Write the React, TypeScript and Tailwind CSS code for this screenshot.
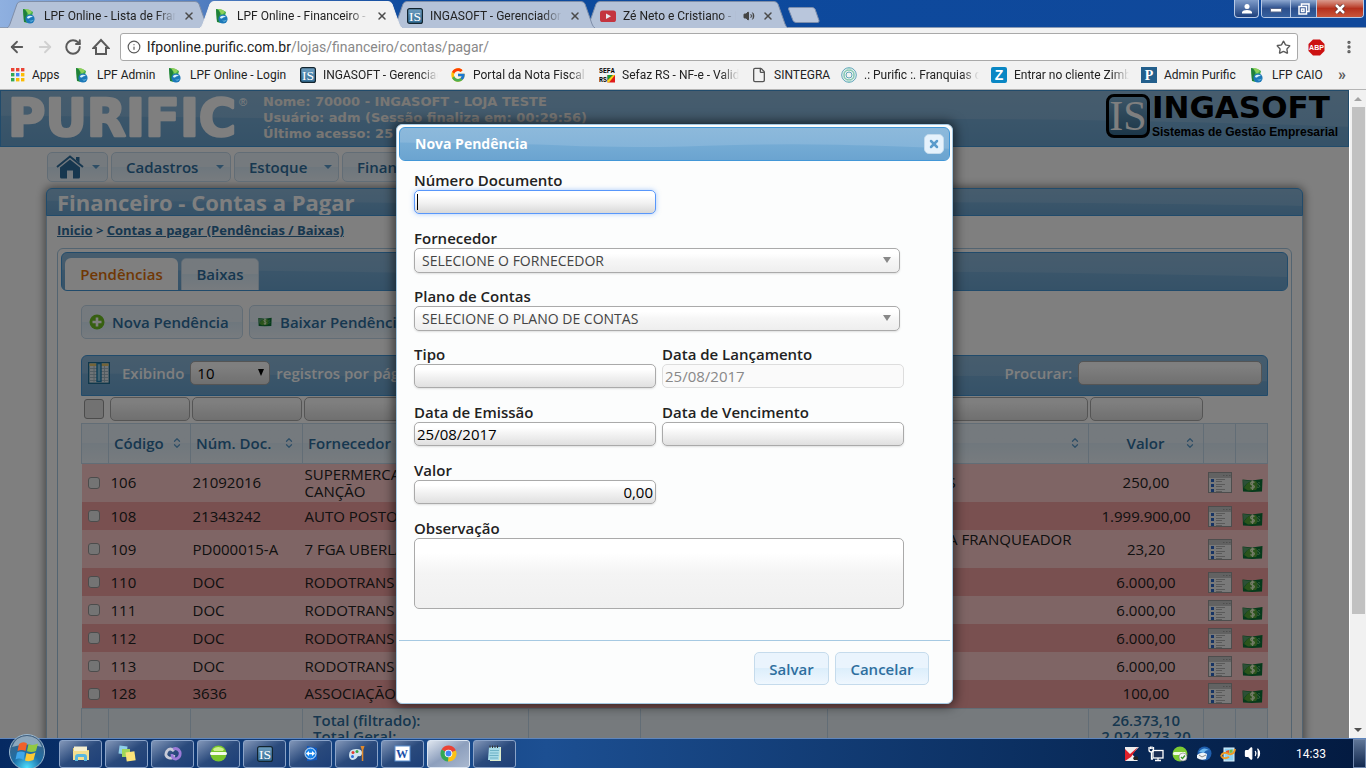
import React from 'react';
import {
  ArrowLeft, ArrowRight, RotateCw, House, Info, Star, EllipsisVertical, X, File, Volume2,
  ChevronUp, ChevronDown,
} from 'lucide-react';
import { FcGoogle } from 'react-icons/fc';

/* ---------- small drawings ---------- */

function LeafIcon() {
  return (
    <svg width="16" height="16" viewBox="0 0 16 16" className="shrink-0">
      <path d="M2 1 Q8 1 12 4 L11 8 L6 15 L3 14 Z" fill="#3fae49" />
      <path d="M2 1 Q6 2 6 6 L5 14 L3 14 Z" fill="#1f7f3a" />
      <path d="M4 1 Q9 1 11 4 L8 7 Z" fill="#8ed05a" />
      <circle cx="9" cy="11" r="4.6" fill="#1c78b8" />
      <path d="M6 9 Q9 6.500 12 9 Q9 8.500 8 10.500 Q6 11 6 9 Z" fill="#d8f1fc" />
      <path d="M8 12.500 Q11 13.500 13 11.500 Q11 15 8 12.500 Z" fill="#8fd4f4" />
    </svg>
  );
}

function IsIcon({ size = 16 }: { size?: number }) {
  return (
    <svg width={size} height={size} viewBox="0 0 16 16" className="shrink-0">
      <defs>
        <linearGradient id="isg" x1="0" y1="0" x2="0" y2="1">
          <stop offset="0" stopColor="#6d9dbf" />
          <stop offset="1" stopColor="#346f97" />
        </linearGradient>
      </defs>
      <rect x="0.6" y="0.6" width="14.8" height="14.8" rx="2" fill="url(#isg)" stroke="#12242f" strokeWidth="1.2" />
      <text x="8" y="12.8" textAnchor="middle" fontSize="13.5" fontFamily="Liberation Serif, serif" fill="#fff">IS</text>
    </svg>
  );
}

function YoutubeIcon() {
  return (
    <svg width="16" height="16" viewBox="0 0 16 16" className="shrink-0">
      <rect x="0" y="2.5" width="16" height="11.5" rx="2.6" fill="#c4343f" />
      <path d="M6 5.5 L11 8.2 L6 11 Z" fill="#e6e6ee" />
    </svg>
  );
}

function SefaIcon() {
  return (
    <svg width="16" height="16" viewBox="0 0 16 16" className="shrink-0">
      <text x="0" y="6" fontSize="6.500" fontWeight="700" fontFamily="Liberation Mono, monospace" fill="#000">SEFA</text>
      <text x="0" y="15" fontSize="6.500" fontWeight="700" fontFamily="Liberation Mono, monospace" fill="#000">RS</text>
      <rect x="8.5" y="8" width="7.5" height="7.5" fill="#e01b1b" />
      <path d="M8.500 8 H14 L8.500 13.500 Z" fill="#159a36" />
      <path d="M14 8 H16 L10 15.500 H8.500 V13.500 Z" fill="#f5d819" />
    </svg>
  );
}

function AppsIcon() {
  const colors = ['#ea4335', '#ea4335', '#ea4335', '#34a853', '#4285f4', '#fbbc05', '#34a853', '#fbbc05', '#fbbc05'];
  return (
    <svg width="14" height="14" viewBox="0 0 14 14" className="shrink-0">
      {colors.map((c, i) => (
        <rect key={i} x={(i % 3) * 5} y={Math.floor(i / 3) * 5} width="3.400" height="3.400" fill={c} />
      ))}
    </svg>
  );
}

function RingsIcon() {
  return (
    <svg width="16" height="16" viewBox="0 0 16 16" className="shrink-0" fill="none">
      <circle cx="8" cy="8" r="7.300" stroke="#5ba5b8" />
      <circle cx="8" cy="8" r="5" stroke="#5fbb9c" />
      <circle cx="8" cy="8" r="3" stroke="#5ba5b8" />
      <path d="M8 1 L13 5 V11 L8 15 L3 11 V5 Z" stroke="#8ecfbe" strokeWidth="0.8" />
    </svg>
  );
}

function LetterIcon({ letter, serif }: { letter: string; serif?: boolean }) {
  return (
    <svg width="16" height="16" viewBox="0 0 16 16" className="shrink-0">
      <rect width="16" height="16" rx={serif ? 0 : 2} fill={serif ? '#235f8c' : '#0a87c4'} />
      <text x="8" y="13" textAnchor="middle" fontSize="14" fontWeight="700"
        fontFamily={serif ? 'Liberation Serif, serif' : 'Liberation Sans, sans-serif'} fill="#fff">{letter}</text>
    </svg>
  );
}

function MoneyIcon({ small }: { small?: boolean }) {
  return (
    <svg width={small ? 14 : 21} height={small ? 10 : 15} viewBox="0 0 21 15" className="inline-block shrink-0">
      <path d="M0.500 1.500 L10 2.500 L20.500 1 L20 13.500 L10 14 L1 13.500 Z" fill="#0c7436" />
      <path d="M2 10 Q5 4 10 3 L14 3 Q17 8 14 12 L6 12.500 Z" fill="#57a836" />
      <path d="M1 2 L9 3 Q4 5 1.500 10 Z" fill="#5aa06c" />
      <path d="M12.500 4.500 Q10.500 3 9 4.500 Q8 6.500 10.500 7 Q13 8 12 9.500 Q10.500 11 8.500 9.500 M10.500 2.500 V12" stroke="#e8f8d0" strokeWidth="1.300" fill="none" />
      <path d="M18 5 Q16 4 15.500 5.500 Q15.500 7 17 7 Q18.500 8 17.500 9 Q16 10 15 9" stroke="#6fbf7a" strokeWidth="1" fill="none" />
    </svg>
  );
}

function DetailIcon() {
  return (
    <svg width="24" height="21" viewBox="0 0 24 21" className="inline-block">
      <rect x="0.500" y="0.500" width="23" height="20" fill="#f2f2f2" stroke="#9a9a9a" />
      <rect x="1" y="1" width="22" height="5" fill="#c4c4c4" />
      <path d="M15 3.500 h1.500 M18 3.500 h1.500 M21 3.500 h1.500" stroke="#9c9c9c" />
      {[7, 12, 17].map((y) => (
        <g key={y}>
          <rect x="3" y={y} width="3" height="3" fill="#2f68c8" />
          <path d={`M8 ${y + 0.5} H17 M8 ${y + 2.5} H14`} stroke="#b4b4b4" />
        </g>
      ))}
    </svg>
  );
}

function ColumnsIcon() {
  return (
    <svg width="22" height="22" viewBox="0 0 22 22" className="shrink-0">
      <rect x="0.700" y="0.700" width="20.600" height="20.600" fill="#dfe9ef" stroke="#1e6f96" strokeWidth="1.400" />
      <rect x="1.500" y="1.500" width="19" height="2.500" fill="#e6c970" />
      <path d="M2 6.500 H20 M2 9.500 H20 M2 12.500 H20 M2 15.500 H20 M2 18.500 H20 M6 4 V20 M16.500 4 V20" stroke="#9db4c1" strokeWidth="0.900" />
      <rect x="9" y="1.500" width="4" height="18" fill="#87c6e4" stroke="#1c7db0" strokeWidth="1.400" />
    </svg>
  );
}

function HomeMenuIcon() {
  return (
    <svg width="28" height="24" viewBox="0 0 28 24" className="shrink-0">
      <path d="M1 12 L14 1.500 L27 12" fill="none" stroke="#2e6e9e" strokeWidth="2" />
      <path d="M20 2 H23.500 V8 L20 5 Z" fill="#2e6e9e" />
      <path d="M4 12.500 L14 4.500 L24 12.500 V22 Q24 23.500 22.500 23.500 H17 V15.500 H11 V23.500 H5.500 Q4 23.500 4 22 Z" fill="#2e6e9e" />
    </svg>
  );
}

function PlusIcon() {
  return (
    <svg width="16" height="16" viewBox="0 0 16 16" className="shrink-0">
      <circle cx="8" cy="8" r="7.500" fill="#6fc023" />
      <path d="M8 3.500 V12.500 M3.500 8 H12.500" stroke="#fff" strokeWidth="2.600" />
    </svg>
  );
}

/* The glossy bar of the theme, with its wave drawn behind the content. */
function GlossBar({ className, children }: { className: string; children?: React.ReactNode }) {
  return (
    <div className={`relative overflow-hidden border border-[#4297d7] bg-linear-to-b from-[#8db9db] to-[#7eb1d8] ${className}`}>
      <svg className="absolute inset-0 h-full w-full" viewBox="0 0 100 40" preserveAspectRatio="none" aria-hidden="true">
        <defs>
          <linearGradient id="wave" x1="0" y1="0" x2="0" y2="1">
            <stop offset="0" stopColor="#76acd5" />
            <stop offset="1" stopColor="#6ba4d0" />
          </linearGradient>
        </defs>
        <path d="M0 18 Q20 19 30 22 T52 23 Q68 19 80 21 T100 26 V40 H0 Z" fill="url(#wave)" />
      </svg>
      {children}
    </div>
  );
}

/* ---------- browser window ---------- */

const bookmarks = [
  { w: 'w-[63px]', label: 'Apps', icon: <AppsIcon /> },
  { w: 'w-[93px]', label: 'LPF Admin', icon: <LeafIcon /> },
  { w: 'w-[133px]', label: 'LPF Online - Login', icon: <LeafIcon /> },
  { w: 'w-[150px]', label: 'INGASOFT - Gerenciador', icon: <IsIcon />, fade: true },
  { w: 'w-[149px]', label: 'Portal da Nota Fiscal Eletrônica', icon: <FcGoogle size={16} className="shrink-0" />, fade: true },
  { w: 'w-[152px]', label: 'Sefaz RS - NF-e - Validador', icon: <SefaIcon />, fade: true },
  { w: 'w-[90px]', label: 'SINTEGRA', icon: <File size={16} color="#555" className="shrink-0" strokeWidth={2} /> },
  { w: 'w-[150px]', label: '.: Purific :. Franquias de', icon: <RingsIcon />, fade: true },
  { w: 'w-[150px]', label: 'Entrar no cliente Zimbra', icon: <LetterIcon letter="Z" />, fade: true },
  { w: 'w-[108px]', label: 'Admin Purific', icon: <LetterIcon letter="P" serif /> },
  { w: 'w-[80px]', label: 'LFP CAIO', icon: <LeafIcon /> },
];

const tabs = [
  { label: 'LPF Online - Lista de Franquias', icon: <LeafIcon />, z: 'z-10' },
  { label: 'LPF Online - Financeiro - Contas', icon: <LeafIcon />, active: true, z: 'z-20' },
  { label: 'INGASOFT - Gerenciador', icon: <IsIcon />, z: 'z-10' },
  { label: 'Zé Neto e Cristiano - Ela', icon: <YoutubeIcon />, audio: true, z: 'z-0' },
];

const fadeText = 'mask-r-from-85% mask-r-to-100%';

function TabStrip() {
  return (
    <header className="flex h-7 shrink-0 items-end border-b border-[#8a9bb5] bg-linear-to-r from-[#8fb0e0] via-[#0b4a9e] via-30% to-[#10489a]">
      <div className="-mb-px flex pl-[7px]">
        {tabs.map((t) => (
          <div key={t.label} className={`relative -mr-[9px] flex h-[27px] w-[202px] items-center pt-0.5 pr-[10px] pl-[14px] ${t.z}`}>
            <svg className="absolute inset-0 h-full w-full" viewBox="0 0 202 27" preserveAspectRatio="none" aria-hidden="true">
              <path d="M0 27 Q2 26 3 23 L10 3 Q11 0.500 14 0.500 H188 Q191 0.500 192 3 L199 23 Q200 26 202 27"
                fill={t.active ? '#f2f2f2' : '#b4c2d8'} stroke={t.active ? '#f2f2f2' : '#7f8ea8'} />
            </svg>
            <div className="relative flex w-full items-center gap-[7px]">
              {t.icon}
              <span className={`min-w-0 flex-1 overflow-hidden whitespace-nowrap ${fadeText}`}>{t.label}</span>
              {t.audio && <Volume2 size={12} fill="#444" color="#444" />}
              <button aria-label="Fechar aba" className="mr-1"><X size={12} color="#4b4b4b" strokeWidth={3} /></button>
            </div>
          </div>
        ))}
      </div>
      <button aria-label="Nova aba" className="mb-1 ml-2">
        <svg width="34" height="16" viewBox="0 0 34 16"><path d="M1.500 2 Q1 0.500 3 0.500 H25 Q27 0.500 28 2 L32 13.500 Q32.500 15.500 30.500 15.500 H9 Q7 15.500 6 13.500 Z" fill="#b9c6dc" stroke="#7d8fae" /></svg>
      </button>
      <div className="ml-auto flex gap-0.5 self-start pr-0.5">
        <button aria-label="Usuário" className="flex h-[18px] w-[25px] items-center justify-center rounded-b border border-t-0 border-[#b7c9e6] bg-linear-to-b from-[#7f9cc9] to-[#1c3f7c]">
          <svg width="10" height="10" viewBox="0 0 10 10"><circle cx="5" cy="2.500" r="2.500" fill="#fff" /><path d="M0 9.500 V8 Q1 6 5 6 T10 8 V9.500 Z" fill="#fff" /></svg>
        </button>
        <div className="flex h-[18px] overflow-hidden rounded-b border border-t-0 border-[#b7c9e6]">
          <button aria-label="Minimizar" className="flex w-7 items-end justify-center bg-linear-to-b from-[#8ea8d0] via-[#2c4f8c] via-50% to-[#35609f] pb-1">
            <svg width="12" height="5" viewBox="0 0 12 5"><rect x="0.500" y="0.500" width="11" height="3.500" fill="#fff" stroke="#55668a" /></svg>
          </button>
          <button aria-label="Restaurar" className="flex w-[27px] items-center justify-center border-x border-[#b7c9e6] bg-linear-to-b from-[#8ea8d0] via-[#2c4f8c] via-50% to-[#35609f]">
            <svg width="12" height="12" viewBox="0 0 12 12" fill="none" stroke="#fff" strokeWidth="1.500"><path d="M3.500 3 V1 H11 V8.500 H9" /><rect x="1" y="3.500" width="7.500" height="7.500" /><rect x="3.500" y="6" width="2.500" height="2.500" /></svg>
          </button>
          <button aria-label="Fechar" className="flex w-[46px] items-center justify-center bg-linear-to-b from-[#d99a8e] via-[#b5301d] via-50% to-[#c9553a]">
            <svg width="12" height="10" viewBox="0 0 12 10"><path d="M2 1 L10 9 M10 1 L2 9" stroke="#5b2a2a" strokeWidth="4" /><path d="M2 1 L10 9 M10 1 L2 9" stroke="#fff" strokeWidth="2.500" /></svg>
          </button>
        </div>
      </div>
    </header>
  );
}

function BrowserBars() {
  return (
    <nav className="flex h-[62px] shrink-0 flex-col border-b border-[#b5b5b5] bg-[#f2f2f2]">
      <div className="flex items-center gap-[10px] pt-[5px] pr-[9px] pl-2">
        <button aria-label="Voltar"><ArrowLeft size={18} color="#5a5a5a" strokeWidth={2.4} /></button>
        <button aria-label="Avançar"><ArrowRight size={18} color="#d0d0d0" strokeWidth={2.4} /></button>
        <button aria-label="Recarregar"><RotateCw size={18} color="#5a5a5a" strokeWidth={2.6} /></button>
        <button aria-label="Início">
          <svg width="18" height="18" viewBox="0 0 18 18" fill="none" stroke="#5a5a5a" strokeWidth="2"><path d="M1.500 10 L9 2 L16.500 10 H14 V16 H4 V10 Z" /></svg>
        </button>
        <div className="flex h-7 flex-1 items-center gap-[6px] rounded-[3px] border border-[#a9a9a9] bg-white px-[6px]">
          <Info size={14} color="#5a5a5a" />
          <span className="flex-1 text-sm"><span>lfponline.purific.com.br</span><span className="text-[#888]">/lojas/financeiro/contas/pagar/</span></span>
          <button aria-label="Favorito"><Star size={15} color="#5a5a5a" strokeWidth={2.2} /></button>
        </div>
        <svg width="17" height="17" viewBox="0 0 17 17">
          <path d="M5 0.500 H12 L16.500 5 V12 L12 16.500 H5 L0.500 12 V5 Z" fill="#cc1111" />
          <text x="8.500" y="11.300" textAnchor="middle" fontSize="7" fontWeight="700" fontFamily="Liberation Sans, sans-serif" fill="#fff">ABP</text>
        </svg>
        <button aria-label="Menu" className="ml-[6px]"><EllipsisVertical size={16} color="#5a5a5a" strokeWidth={3} /></button>
      </div>
      <div className="flex flex-1 items-center pr-5 pl-[11px]">
        {bookmarks.map((b) => (
          <a key={b.label} href="#" className={`flex shrink-0 items-center gap-[7px] ${b.fade ? 'pr-3' : ''} ${b.w}`}>
            {b.icon}
            <span className={`whitespace-nowrap ${b.fade ? `overflow-hidden ${fadeText}` : ''}`}>{b.label}</span>
          </a>
        ))}
        <button aria-label="Mais favoritos" className="ml-auto text-base leading-4 font-bold text-[#5a5a5a]">»</button>
      </div>
    </nav>
  );
}

/* ---------- page behind the dialog ---------- */

const rows = [
  { cod: '106', doc: '21092016', forn: 'SUPERMERCADO CANÇÃO', plano: 'S', valor: '250,00', h: 'h-[39px]' },
  { cod: '108', doc: '21343242', forn: 'AUTO POSTO', valor: '1.999.900,00', h: 'h-7' },
  { cod: '109', doc: 'PD000015-A', forn: '7 FGA UBERLANDIA', plano: 'A FRANQUEADOR', valor: '23,20', h: 'h-[38px]' },
  { cod: '110', doc: 'DOC', forn: 'RODOTRANS', valor: '6.000,00', h: 'h-7' },
  { cod: '111', doc: 'DOC', forn: 'RODOTRANS', valor: '6.000,00', h: 'h-7' },
  { cod: '112', doc: 'DOC', forn: 'RODOTRANS', valor: '6.000,00', h: 'h-7' },
  { cod: '113', doc: 'DOC', forn: 'RODOTRANS', valor: '6.000,00', h: 'h-7' },
  { cod: '128', doc: '3636', forn: 'ASSOCIAÇÃO', valor: '100,00', h: 'h-7' },
];

const fieldSkin = 'rounded-[5px] border border-[#aaa] bg-linear-to-b from-white from-20% via-[#f1f1f1] via-55% to-[#e0e0e0]';
const buttonSkin = 'rounded-[5px] border border-[#c5dbec] bg-linear-to-b from-[#eaf4fd] from-50% via-[#dceefb] via-50% to-[#eff7fe] font-semibold text-[#2e6e9e]';

function Sorter() {
  return (
    <span className="flex flex-col text-[#5c9ccc]">
      <ChevronUp size={10} strokeWidth={3} className="-mb-0.5" />
      <ChevronDown size={10} strokeWidth={3} className="-mt-0.5" />
    </span>
  );
}

const headCells = ['', 'Código', 'Núm. Doc.', 'Fornecedor', '', '', '', 'Valor', '', ''];
const colWidths = ['w-[27px]', 'w-[82px]', 'w-[112px]', 'w-[226px]', 'w-[112px]', 'w-[187px]', '', 'w-[115px]', 'w-8', 'w-8'];

function BillsTable() {
  return (
    <table className="w-full table-fixed border-collapse">
      <colgroup>{colWidths.map((w, i) => <col key={i} className={w} />)}</colgroup>
      <thead>
        <tr className="h-[27px]">
          {headCells.map((_, i) => (
            <td key={i} className="px-px">
              {i === 0 && <button aria-label="Selecionar todos" className="ml-px block h-5 w-5 rounded-[3px] border border-[#999] bg-[#e4e4e4]" />}
              {i > 0 && i < 8 && <input aria-label={`Filtro ${i}`} className={`block h-6 w-full ${fieldSkin}`} />}
            </td>
          ))}
        </tr>
        <tr className="h-10 bg-linear-to-b from-[#eaf4fd] from-50% via-[#e0effa] via-50% to-[#eff7fe]">
          {headCells.map((h, i) => (
            <th key={i} className="border border-[#c5dbec] px-[5px] text-left font-semibold text-[#2e6e9e]">
              <span className="flex items-center justify-between">
                <span className={i === 7 ? 'flex-1 pl-3 text-center' : 'whitespace-nowrap'}>{h}</span>
                {i > 0 && i < 8 && <span className="pr-[3px]"><Sorter /></span>}
              </span>
            </th>
          ))}
        </tr>
      </thead>
      <tbody className="text-[15px]">
        {rows.map((r, i) => (
          <tr key={r.cod} className={`${r.h} leading-[17px] ${i % 2 ? 'bg-[#f2a0a0]' : 'bg-[#ffcaca]'}`}>
            <td className="pl-[6px]"><input type="checkbox" aria-label={`Selecionar ${r.cod}`} className="block h-3 w-3 appearance-none rounded-[3px] border border-[#999] bg-[#e8e8e8]" /></td>
            <td className="pl-[2px]">{r.cod}</td>
            <td className="pl-[2px]">{r.doc}</td>
            <td className="pl-[2px]">{i === 0 ? <>SUPERMERCADO<br />CANÇÃO</> : r.forn}</td>
            <td /><td />
            <td className={i === 2 ? 'pr-[17px] pt-px text-right align-top' : 'pl-[120px]'}>{r.plano}</td>
            <td className="text-center">{r.valor}</td>
            <td className="pl-1"><button aria-label="Detalhes" className="block"><DetailIcon /></button></td>
            <td className="pt-1 pl-[6px]"><button aria-label="Baixar" className="block"><MoneyIcon /></button></td>
          </tr>
        ))}
      </tbody>
      <tfoot>
        <tr className="h-[60px] bg-[#ecf5fb] align-top leading-4 font-semibold text-[#2e6e9e]">
          {headCells.map((_, i) => (
            <td key={i} className="border border-[#c5dbec] pt-[3px]">
              {i === 3 && <div className="pl-[10px]">Total (filtrado):<br />Total Geral:</div>}
              {i === 7 && <div className="text-center">26.373,10<br />2.024.273,20</div>}
            </td>
          ))}
        </tr>
      </tfoot>
    </table>
  );
}

function MenuButton({ children, className }: { children: React.ReactNode; className: string }) {
  return (
    <button className={`flex h-[30px] items-center justify-between pr-[6px] pl-[14px] ${buttonSkin} ${className}`}>
      {children}
      <svg width="8" height="4" viewBox="0 0 8 4"><path d="M0 0 H8 L4 4 Z" fill="#5c9ccc" /></svg>
    </button>
  );
}

function FinancePage() {
  return (
    <div className="h-full overflow-hidden bg-white text-[15px]">
      <GlossBar className="h-[57px]">
        <div className="relative flex h-full items-start justify-between pt-[3px] pr-[10px] pl-2">
          <div className="flex">
            <svg width="246" height="48" viewBox="0 0 246 48" aria-label="Purific">
              <text x="-1" y="42" fontSize="51" fontWeight="700" fontFamily="DejaVu Sans, sans-serif" fill="#fff" stroke="#fff" strokeWidth="2.500" strokeLinejoin="round">PURIFIC</text>
              <text x="230" y="12" fontSize="11" fontFamily="Liberation Sans, sans-serif" fill="#fff">®</text>
            </svg>
            <p className="pl-2 font-['DejaVu_Sans',sans-serif] text-[13px] leading-4 font-bold text-[#f0ede8]">
              Nome: 70000 - INGASOFT - LOJA TESTE<br />Usuário: adm (Sessão finaliza em: 00:29:56)<br />Último acesso: 25
            </p>
          </div>
          <div className="flex gap-0.5">
            <span className="flex h-11 w-11 items-center justify-center rounded-lg border-3 border-black bg-linear-to-b from-[#78abce] to-[#386e92] font-['Liberation_Serif',serif] text-[42px] leading-none text-white">IS</span>
            <div className="text-black">
              <div className="font-['DejaVu_Sans',sans-serif] text-[31px] leading-[27px] font-bold">INGASOFT</div>
              <div className="pt-1 font-['Liberation_Sans',sans-serif] text-xs leading-[14px] font-bold">Sistemas de Gestão Empresarial</div>
            </div>
          </div>
        </div>
      </GlossBar>

      <div className="flex gap-[3px] px-[47px] pt-[5px] pb-[6px]">
        <button aria-label="Início" className={`flex h-[30px] w-[61px] items-center justify-between pr-[7px] pl-2 ${buttonSkin}`}>
          <HomeMenuIcon />
          <svg width="8" height="4" viewBox="0 0 8 4"><path d="M0 0 H8 L4 4 Z" fill="#5c9ccc" /></svg>
        </button>
        <MenuButton className="w-[120px]">Cadastros</MenuButton>
        <MenuButton className="w-[105px]">Estoque</MenuButton>
        <MenuButton className="w-[126px]">Financeiro</MenuButton>
      </div>

      <main className="mx-[46px] rounded-t-md border border-[#a6c9e2] shadow-[0_0_10px_1px_rgba(0,0,0,0.5)]">
        <GlossBar className="-mx-px -mt-px h-7 rounded-t-md">
          <h1 className="relative pl-[10px] text-[22px] leading-[26px] font-bold text-white">Financeiro - Contas a Pagar</h1>
        </GlossBar>
        <p className="px-[10px] pt-[6px] text-[13px] leading-4 font-bold text-[#2e6e9e]">
          <a href="#" className="underline">Inicio</a> &gt; <a href="#" className="underline">Contas a pagar (Pendências / Baixas)</a>
        </p>
        <section className="mx-[10px] mt-[10px] rounded-t-md border border-[#a6c9e2] p-[3px]">
          <GlossBar className="h-[39px] rounded-md">
            <div role="tablist" className="relative flex gap-[3px] pt-[5px] pl-[3px]">
              <button role="tab" className="h-[34px] w-[113px] rounded-t-md bg-white pb-0.5 font-semibold text-[#e17009]">Pendências</button>
              <button role="tab" className={`h-[33px] w-[78px] rounded-b-none pb-0.5 ${buttonSkin}`}>Baixas</button>
            </div>
          </GlossBar>
          <div className="px-5 pt-[14px]">
            <div className="flex gap-[6px]">
              <button className={`flex h-[34px] w-[162px] items-center gap-[7px] px-[7px] ${buttonSkin}`}><PlusIcon />Nova Pendência</button>
              <button className={`flex h-[34px] w-[180px] items-center gap-2 px-2 ${buttonSkin}`}><MoneyIcon small />Baixar Pendências</button>
            </div>
            <GlossBar className="mt-4 h-[41px] rounded-t-md">
              <div className="relative flex items-center pt-[5px] pr-[5px] pl-[6px] font-semibold text-white">
                <ColumnsIcon />
                <label className="flex items-center gap-[6px] pl-3 whitespace-nowrap">
                  Exibindo
                  <span className="relative">
                    <select className="h-6 w-20 appearance-none rounded-[5px] border border-[#aaa] bg-linear-to-b from-white from-20% to-[#e0e0e0] pl-[6px] text-[15px] font-normal text-black"><option>10</option></select>
                    <svg width="6" height="7" viewBox="0 0 6 7" className="absolute top-2 right-[6px]"><path d="M0 0 H6 L3 7 Z" fill="#000" /></svg>
                  </span>
                  registros por página
                </label>
                <label className="ml-auto flex items-center gap-[6px]">
                  Procurar:
                  <input className={`h-6 w-[184px] ${fieldSkin}`} />
                </label>
              </div>
            </GlossBar>
            <BillsTable />
          </div>
        </section>
      </main>
    </div>
  );
}

/* ---------- dialog ---------- */

const dialogField = `h-6 w-full px-0.5 text-[15px] text-black shadow-[0_1px_2px_rgba(0,0,0,0.12)] outline-none ${fieldSkin}`;

function Field({ label, children, className = 'w-[242px]' }: { label: string; children: React.ReactNode; className?: string }) {
  return (
    <label className={`flex flex-col ${className}`}>
      <span className="pb-px leading-[17px] font-semibold text-[#222]">{label}</span>
      {children}
    </label>
  );
}

function PickList({ text }: { text: string }) {
  return (
    <span className="relative">
      <select className="block h-[25px] w-full appearance-none rounded-[5px] border border-[#aaa] bg-linear-to-b from-white from-20% via-[#f6f6f6] via-50% to-[#eee] pl-[7px] text-sm text-[#444] shadow-[0_1px_2px_rgba(0,0,0,0.12)]">
        <option>{text}</option>
      </select>
      <svg width="8" height="6" viewBox="0 0 8 6" className="absolute top-[9px] right-[9px]"><path d="M0 0 H8 L4 6 Z" fill="#888" /></svg>
    </span>
  );
}

function NewBillDialog() {
  return (
    <div role="dialog" aria-label="Nova Pendência" className="flex w-[557px] flex-col rounded-md border border-[#a6c9e2] bg-[#fcfdfd] p-0.5 text-[15px] shadow-[0_0_12px_2px_rgba(0,0,0,0.6)]">
      <GlossBar className="h-[34px] rounded-md">
        <div className="relative flex h-full items-center justify-between pr-[5px] pl-[15px]">
          <h2 className="text-sm font-bold text-white">Nova Pendência</h2>
          <button aria-label="Fechar" className="flex h-5 w-5 items-center justify-center rounded-[5px] border border-[#c5dbec] bg-[#e6f2fc]"><X size={12} color="#5c9ccc" strokeWidth={5} /></button>
        </div>
      </GlossBar>
      <form className="flex flex-col gap-4 px-[15px] pt-[11px] pb-[31px]" onSubmit={(e) => e.preventDefault()}>
        <Field label="Número Documento">
          <span className="relative">
            <input className="block h-6 w-full rounded-[5px] border border-[#5897fb] bg-linear-to-b from-white from-20% via-[#f1f1f1] via-55% to-[#d8d8d8] shadow-[0_0_5px_rgba(88,151,251,0.5)] outline-none" />
            <span className="absolute top-1 left-[3px] h-4 w-px bg-black" />
          </span>
        </Field>
        <Field label="Fornecedor" className="w-[486px]"><PickList text="SELECIONE O FORNECEDOR" /></Field>
        <Field label="Plano de Contas" className="-mt-px w-[486px]"><PickList text="SELECIONE O PLANO DE CONTAS" /></Field>
        <div className="-mt-px flex gap-[6px]">
          <Field label="Tipo"><input className={dialogField} /></Field>
          <Field label="Data de Lançamento"><input disabled defaultValue="25/08/2017" className="h-6 w-full rounded-[5px] border border-[#ddd] bg-[#fafafa] px-0.5 text-[15px] text-[#888]" /></Field>
        </div>
        <div className="flex gap-[6px]">
          <Field label="Data de Emissão"><input defaultValue="25/08/2017" className={dialogField} /></Field>
          <Field label="Data de Vencimento"><input className={dialogField} /></Field>
        </div>
        <Field label="Valor"><input defaultValue="0,00" className={`text-right ${dialogField}`} /></Field>
        <Field label="Observação" className="w-[490px]">
          <textarea className="block h-[71px] w-full resize-none rounded-[5px] border border-[#aaa] bg-linear-to-b from-white from-20% via-[#f4f4f4] via-50% to-[#f0f0f0] outline-none" />
        </Field>
      </form>
      <footer className="flex justify-end gap-[6px] border-t border-[#a6c9e2] pt-[11px] pr-[21px] pb-4">
        <button className={`h-[33px] w-[75px] ${buttonSkin}`}>Salvar</button>
        <button className={`h-[33px] w-[94px] ${buttonSkin}`}>Cancelar</button>
      </footer>
    </div>
  );
}

/* ---------- taskbar ---------- */

function TaskIcon({ name }: { name: string }) {
  switch (name) {
    case 'Explorer':
      return <svg width="18" height="17" viewBox="0 0 18 17"><path d="M1 3 H7 L8 5 H17 V15 H1 Z" fill="#e9cf6c" /><path d="M2 1.500 H15 V6 H2 Z" fill="#f5efcf" /><path d="M1 6 H17 V15 H1 Z" fill="#f4df8f" /><path d="M3 16 V12 Q3 9 6 9 H12 Q15 9 15 12 V16 H12 V12 H6 V16 Z" fill="#58b7e0" /></svg>;
    case 'Notas':
      return <svg width="18" height="17" viewBox="0 0 18 17"><rect x="1" y="1" width="8" height="8" fill="#8fd0ea" transform="rotate(8 5 5)" /><rect x="4" y="4" width="8" height="8" fill="#9fd65b" /><rect x="8" y="7" width="9" height="9" fill="#fbe37a" transform="rotate(-8 12 11)" /></svg>;
    case 'Espiral':
      return <svg width="18" height="16" viewBox="0 0 18 16" fill="none"><path d="M10 5 Q6 1 3 5 Q0 10 5 12 Q9 13 10 9" stroke="#c8cbd8" strokeWidth="2.800" /><path d="M8 8 Q8 13 12 13 Q17 11 16 6 Q14 1 9 3" stroke="#9c7bd8" strokeWidth="2.800" /></svg>;
    case 'Esfera':
      return <svg width="17" height="17" viewBox="0 0 17 17"><circle cx="8.500" cy="8.500" r="8" fill="#79c62c" /><path d="M3 4 Q8 0 14 4 L13 6 H4 Z" fill="#cdf08b" /><rect x="0" y="7" width="17" height="3" rx="1.500" fill="#f4fbe8" /></svg>;
    case 'INGASOFT':
      return <IsIcon />;
    case 'TeamViewer':
      return <svg width="16" height="17" viewBox="0 0 16 17"><path d="M4 1 L14 3 V15 L4 16 Z" fill="#0f59c0" /><circle cx="7.500" cy="8.500" r="5.500" fill="#1a84ea" stroke="#dceeff" /><path d="M3 8.500 L6 6 V7.700 H9 V6 L12 8.500 L9 11 V9.300 H6 V11 Z" fill="#fff" /></svg>;
    case 'Paint':
      return <svg width="18" height="17" viewBox="0 0 18 17"><path d="M1 10 Q1 4 8 4 Q15 4 14 9 Q13 12 10 11 Q8 15 4 15 Q1 14 1 10 Z" fill="#cfe3ef" /><circle cx="5" cy="7.500" r="1.500" fill="#e23c2e" /><circle cx="9" cy="6.500" r="1.500" fill="#3aa845" /><circle cx="4.500" cy="11.500" r="1.500" fill="#2d6fd8" /><path d="M12.500 1 H16.500 L15.300 5 V16 H13.800 V5 Z" fill="#e18a2c" /></svg>;
    case 'Word':
      return <svg width="17" height="17" viewBox="0 0 17 17"><rect x="1" y="1" width="15" height="15" fill="#fff" stroke="#5b8fd0" /><text x="8" y="13" fontSize="12" fontWeight="700" textAnchor="middle" fontFamily="Liberation Serif, serif" fill="#1b4fa8">W</text></svg>;
    case 'Chrome':
      return <svg width="17" height="17" viewBox="0 0 17 17"><path d="M8.500 8.500 L1.600 4.500 A8 8 0 0 1 15.900 5.500 Z" fill="#ea4335" /><path d="M8.500 8.500 L15.900 5.500 A8 8 0 0 1 8 16.500 Z" fill="#fbc116" /><path d="M8.500 8.500 L8 16.500 A8 8 0 0 1 1.600 4.500 Z" fill="#34a853" /><circle cx="8.500" cy="8.500" r="3.800" fill="#fff" /><circle cx="8.500" cy="8.500" r="2.900" fill="#4285f4" /></svg>;
    default:
      return <svg width="17" height="17" viewBox="0 0 17 17"><path d="M4 2 H15 V16 H4 Z" fill="#ddeccd" /><path d="M3 2 H14 L13 15 H2 Z" fill="#a8dbe8" /><path d="M4 5.500 H13 M4 8 H12.500 M3.500 10.500 H12.500 M4 13 H12" stroke="#5fa8bc" strokeWidth="0.800" /><path d="M4 0.500 V3 M6.500 0.500 V3 M9 0.500 V3 M11.500 0.500 V3" stroke="#333" /></svg>;
  }
}

const tasks = ['Explorer', 'Notas', 'Espiral', 'Esfera', 'INGASOFT', 'TeamViewer', 'Paint', 'Word', 'Chrome', 'Bloco'];

function Taskbar() {
  return (
    <footer className="relative z-30 flex h-[30px] shrink-0 items-center border-t border-[#5f86bd] bg-linear-to-r from-[#062a62] via-[#1c4f92] via-40% to-[#031a40]">
      <button aria-label="Iniciar" className="-mt-[5px] ml-2 h-9 shrink-0 self-start">
        <svg width="38" height="36" viewBox="0 0 38 36">
          <defs>
            <radialGradient id="orb" cx="0.500" cy="0.950" r="0.900">
              <stop offset="0" stopColor="#4fe0ff" />
              <stop offset="0.450" stopColor="#1c6fa8" />
              <stop offset="1" stopColor="#41607f" />
            </radialGradient>
          </defs>
          <circle cx="19" cy="18" r="17.500" fill="url(#orb)" stroke="#9db9cf" />
          <path d="M4 13 Q8 2 19 2 T34 13 Q19 8 4 13 Z" fill="#c3d4e0" opacity="0.600" />
          <path d="M11 10 Q15 7 19 9.500 L17.500 17 Q13.500 15 9.500 17 Z" fill="#f0602a" />
          <path d="M20.500 10 Q25 12 30 9.500 L28 17 Q24 19 19 17.300 Z" fill="#92c843" />
          <path d="M9 18.500 Q13 16.500 17 18.500 L15.500 26 Q11.500 23.500 7.500 25.500 Z" fill="#3fa6ea" />
          <path d="M18.500 19 Q23 21 27.500 18.500 L25.500 26 Q21 28 17 26.500 Z" fill="#fcc935" />
        </svg>
      </button>
      <div className="flex gap-[3px] pl-[13px]">
        {tasks.map((t) => (
          <button key={t} aria-label={t}
            className={`flex h-[28px] w-[43px] items-center justify-center rounded-[3px] border ${t === 'Chrome' ? 'border-[#dbe5f2] bg-linear-to-br from-[#dfe6ef] via-[#8d9fbd] via-50% to-[#a9b8cf]' : 'border-[#8aa3c8] bg-linear-to-br from-[#8397b8] via-[#2a4a7c] via-50% to-[#1d3f78]'}`}>
            <TaskIcon name={t} />
          </button>
        ))}
      </div>
      <div className="ml-auto flex shrink-0 items-center gap-2">
        <svg width="16" height="16" viewBox="0 0 16 16"><path d="M1 1 H15 L8 8 L14 15 H1 Z" fill="#eee" /><path d="M1 3 L6 8 L14 1 L7 11 L1 15 Z" fill="#e0202a" /><path d="M9 12 Q11 9 14 11 V14 H10 Z" fill="#222" /></svg>
        <svg width="16" height="16" viewBox="0 0 16 16" fill="none" stroke="#fff" strokeWidth="1.300"><rect x="5" y="4.500" width="10" height="7.500" fill="#1b2f55" /><path d="M7 14.500 H13 M10 12 V14 M3.500 6 V13 H5 M1 1 V4 Q1 6 3.500 6 Q5.500 6 5.500 3 V1 M2.500 0.500 V3 M4 0.500 V3" /></svg>
        <svg width="16" height="16" viewBox="0 0 16 16"><circle cx="8" cy="8" r="7.500" fill="#7ccb33" /><rect x="1" y="6" width="13" height="3" rx="1.500" fill="#eefadf" /><circle cx="11" cy="11" r="4" fill="#f4f4f4" stroke="#777" strokeWidth="0.600" /><path d="M9 11 L10.500 12.500 L13 9.500" stroke="#3c9b28" strokeWidth="1.400" fill="none" /></svg>
        <svg width="16" height="16" viewBox="0 0 16 16"><circle cx="8.500" cy="7.500" r="7" fill="#1f5fae" /><path d="M3 6 Q7 0 13 4 Q9 4 8 7 Z" fill="#6bb6ee" /><path d="M1 9 Q6 5 11 8 L10 13 Q5 15 1 12 Z" fill="#eef3f8" /><path d="M3 9 L6 11 L10 9" stroke="#888" fill="none" /></svg>
        <svg width="16" height="16" viewBox="0 0 16 16"><rect x="4" y="2" width="10" height="13" fill="#8fd2f2" stroke="#dff3fd" /><path d="M6 5 L9 4 V7 L6 8 Z" fill="#e4532c" /><path d="M9.500 4 L12.500 3.500 V6.500 L9.500 7 Z" fill="#76bb3a" /><path d="M1 10 Q3 5 9 8 Q14 9 15 3 M1 10 Q4 14 9 11" stroke="#f19a24" strokeWidth="2" fill="none" /></svg>
        <Volume2 size={17} color="#fff" fill="#fff" strokeWidth={1.6} />
        <time className="w-[76px] pl-2 text-center text-xs text-white">14:33</time>
        <button aria-label="Mostrar área de trabalho" className="h-[29px] w-[13px] border border-[#6f87ad] bg-linear-to-b from-[#5f7596] to-[#12294f]" />
      </div>
    </footer>
  );
}

export default function App() {
  return (
    <div className="flex h-screen flex-col overflow-hidden font-[Roboto,sans-serif] text-xs text-[#222]">
      <TabStrip />
      <BrowserBars />
      <div className="flex min-h-0 flex-1">
        <div className="relative min-w-0 flex-1 overflow-hidden font-['Open_Sans',sans-serif]">
          <FinancePage />
          <div className="absolute inset-0 flex items-center justify-center bg-black/50">
            <NewBillDialog />
          </div>
        </div>
        <div className="flex w-[17px] shrink-0 flex-col items-center border-l border-white bg-[#f1f1f1]">
          <span className="flex h-[17px] items-center"><svg width="8" height="4" viewBox="0 0 8 4"><path d="M0 4 H8 L4 0 Z" fill="#a3a3a3" /></svg></span>
          <span className="h-[507px] w-[13px] bg-[#c1c1c1]" />
          <span className="mt-auto flex h-[17px] items-center"><svg width="8" height="4" viewBox="0 0 8 4"><path d="M0 0 H8 L4 4 Z" fill="#505050" /></svg></span>
        </div>
      </div>
      <Taskbar />
    </div>
  );
}
